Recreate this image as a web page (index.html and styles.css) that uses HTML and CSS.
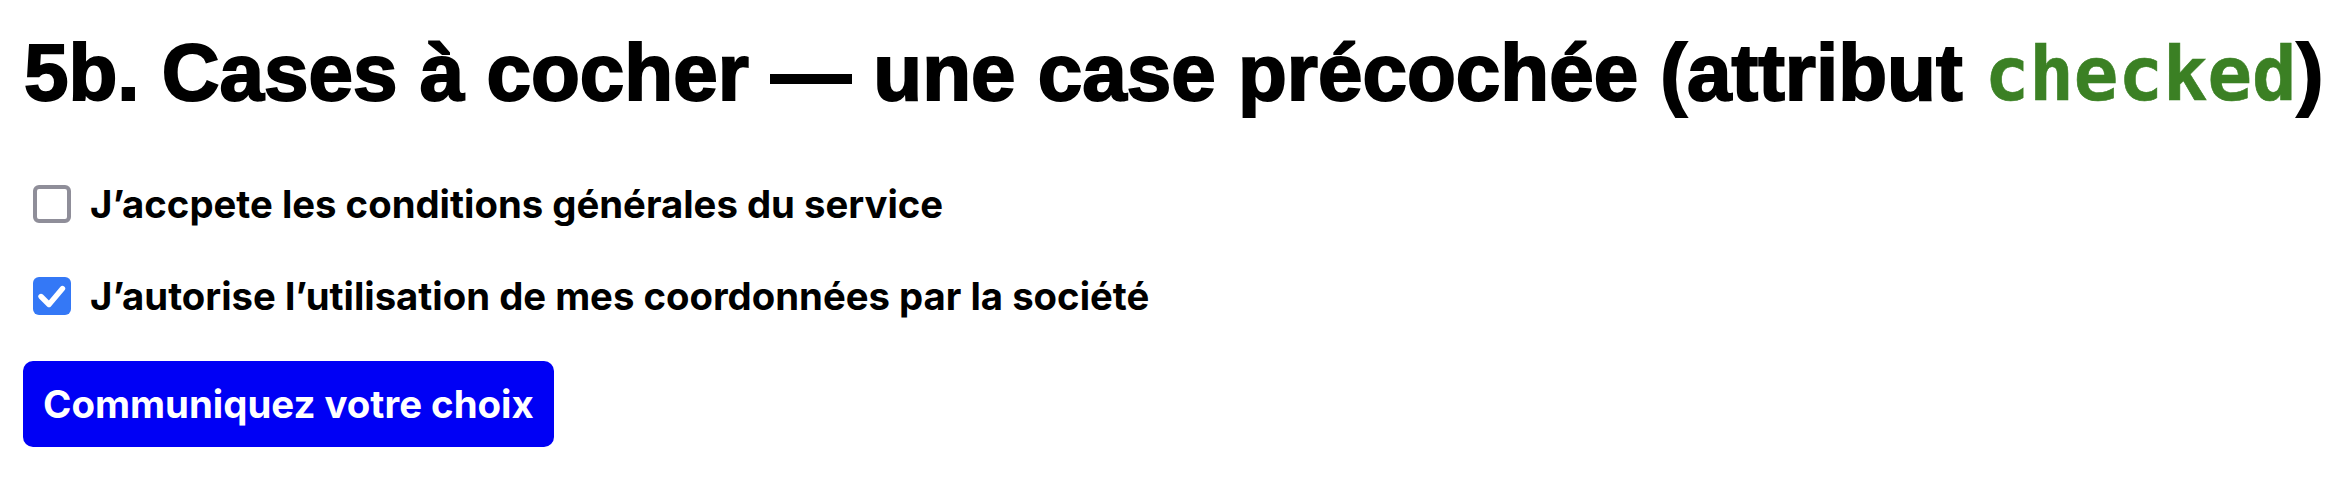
FILE: index.html
```html
<!DOCTYPE html>
<html lang="fr">
<head>
<meta charset="utf-8">
<title>5b. Cases à cocher</title>
<link rel="stylesheet" href="styles.css">
</head>
<body>
<main class="page">
  <h1 class="title">5b. Cases à cocher — une case précochée (attribut <code class="attr">checked</code>)</h1>
  <form class="form">
    <div class="options">
      <label class="option">
        <span class="box"></span>
        <span class="text">J’accpete les conditions générales du service</span>
      </label>
      <label class="option">
        <span class="box box-checked">
          <svg class="tick" viewBox="0 0 38 38" width="38" height="38"><path d="M8 19.5 L16 27.5 L29.5 11.5" fill="none" stroke="#fff" stroke-width="5.4" stroke-linecap="round" stroke-linejoin="round"/></svg>
        </span>
        <span class="text">J’autorise l’utilisation de mes coordonnées par la société</span>
      </label>
    </div>
    <button class="submit" type="button">Communiquez votre choix</button>
  </form>
</main>
</body>
</html>
```
FILE: styles.css
```css
html, body {
  margin: 0;
  padding: 0;
  background: #fff;
}
.page {
  padding: 0 24px;
}
.title {
  margin: 27px 0 0 0;
  font-family: "Liberation Sans", Arial, sans-serif;
  font-weight: 700;
  font-size: 80px;
  line-height: 92px;
  color: #000;
  white-space: nowrap;
  -webkit-text-stroke: 2px #000;
}
.attr {
  font-family: "DejaVu Sans Mono", monospace;
  font-weight: 700;
  font-size: 74px;
  color: #3b8024;
  -webkit-text-stroke: 0.6px #3b8024;
}
.form {
  margin-top: 64px;
  display: flex;
  flex-direction: column;
  align-items: flex-start;
  gap: 45px;
}
.options {
  display: flex;
  flex-direction: column;
  gap: 52px;
}
.option {
  display: flex;
  align-items: center;
  gap: 19px;
  height: 40px;
  padding-left: 9px;
}
.box {
  box-sizing: border-box;
  width: 38px;
  height: 38px;
  border: 4px solid #8f8e99;
  border-radius: 6px;
  background: #fff;
  flex: none;
}
.box-checked {
  border: none;
  background: #3478f6;
}
.tick {
  display: block;
}
.text {
  font-family: Inter, "Noto Sans", sans-serif;
  font-weight: 700;
  font-size: 38.3px;
  color: #000;
}
.submit {
  margin-left: -1px;
  height: 86px;
  padding: 0 20px;
  border: none;
  border-radius: 10px;
  background: #0000f5;
  color: #fff;
  font-family: Inter, "Noto Sans", sans-serif;
  font-weight: 700;
  font-size: 38.4px;
}
```
